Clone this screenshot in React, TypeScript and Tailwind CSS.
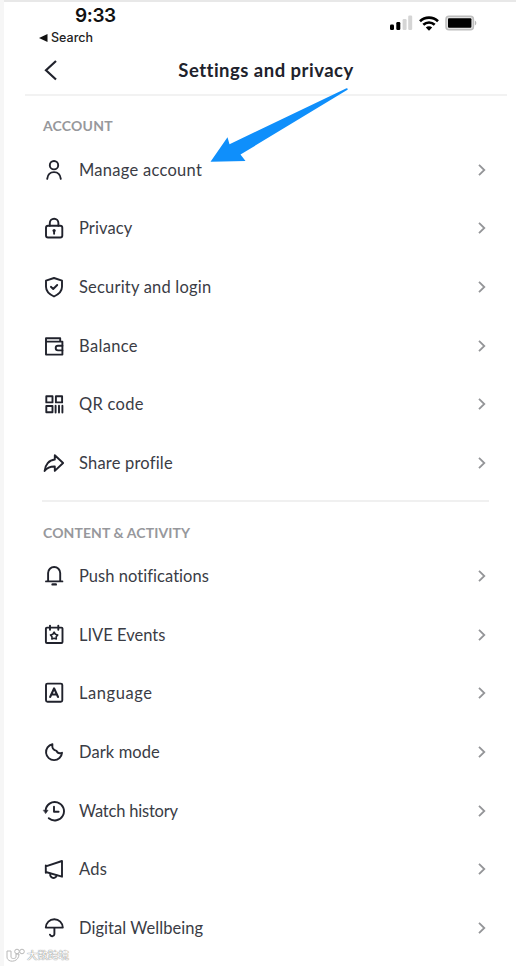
import type { ReactNode } from "react";

interface Item {
  label: string;
  icon: ReactNode;
  className: string;
}

const ACCOUNT: Item[] = [
  {
    label: "Manage account",
    className: "tracking-[0.27px]",
    icon: (
      <>
        <circle cx="12" cy="7.2" r="4.2" />
        <path d="M5.2 20.800c.5-4.100 3.100-6.700 6.800-6.700s6.300 2.600 6.800 6.700" />
      </>
    ),
  },
  {
    label: "Privacy",
    className: "tracking-[0.1px]",
    icon: (
      <>
        <rect x="4" y="9.700" width="16.300" height="11.800" rx="2" />
        <path d="M7.800 9.700V7a4.300 4.300 0 0 1 8.600 0v2.700M12.100 15v2.800" />
        <circle cx="12.100" cy="14.600" r="1.600" fill="currentColor" stroke="none" />
      </>
    ),
  },
  {
    label: "Security and login",
    className: "tracking-[0.2px]",
    icon: (
      <>
        <path d="M12 3l8 2.7v6.100c0 4.400-3.400 7.600-8 9.700-4.600-2.100-8-5.300-8-9.700V5.700z" />
        <path d="M8.900 11.800l2.300 2.200 4-4" />
      </>
    ),
  },
  {
    label: "Balance",
    className: "tracking-[0.34px]",
    icon: (
      <>
        <path d="M4 4.300h14.200v3.300h2.200v13H4zM4 7.600h14.200" />
        <path d="M20.400 11.800h-4.400a2.300 2.300 0 0 0 0 4.600h4.400" />
      </>
    ),
  },
  {
    label: "QR code",
    className: "tracking-[0.27px]",
    icon: (
      <>
        <rect x="4.300" y="4.200" width="6.200" height="6.200" />
        <rect x="13.900" y="4.200" width="6.200" height="6.200" />
        <rect x="4.300" y="14" width="6.200" height="6.200" />
        <path d="M13.600 13.700v6.900M17 13.700v6.900M20.400 13.700v6.900" />
      </>
    ),
  },
  {
    label: "Share profile",
    className: "tracking-[0.2px]",
    icon: <path d="M12.800 4.200l8.300 7.800-8.300 7.900v-4.400c-4.500-.1-7.700 1.100-10.200 4.500C3.100 13.700 7 9 12.800 8.500z" />,
  },
];

const CONTENT: Item[] = [
  {
    label: "Push notifications",
    className: "tracking-[0.04px]",
    icon: (
      <>
        <path d="M4 17.400h16.400M6.100 17.400V9a6.050 6.050 0 0 1 12.100 0v8.400" />
        <path d="M10.600 20.400h3.200" strokeWidth="2.400" />
      </>
    ),
  },
  {
    label: "LIVE Events",
    className: "tracking-0",
    icon: (
      <>
        <rect x="3.900" y="4.600" width="16.600" height="15.400" rx="1" />
        <path d="M8 2.600v4.200M16.300 2.600v4.200" />
        <path
          d="M12.100 9.200l1.300 2 2.300.700-1.500 1.800.100 2.300-2.200-.800-2.200.800.100-2.300-1.500-1.800 2.300-.700z"
          strokeWidth="1.600"
        />
      </>
    ),
  },
  {
    label: "Language",
    className: "tracking-[0.56px]",
    icon: (
      <>
        <rect x="4" y="2.600" width="16.300" height="18.200" rx="1.500" />
        <path d="M8.200 15.900l3.900-8.500 3.900 8.500M9.600 13.500h5" strokeWidth="2.200" />
      </>
    ),
  },
  {
    label: "Dark mode",
    className: "tracking-[0.1px]",
    icon: <path d="M10.400 4.300a8 8 0 1 0 9.600 8.500c-2.800 1-4.800-.1-5.500-1.900-2.700-.7-4.600-3.200-4.100-6.600z" />,
  },
  {
    label: "Watch history",
    className: "tracking-[-0.2px]",
    icon: (
      <>
        <path d="M3.600 11.500a9.200 9.200 0 1 1 3.200 7.700M12 7.700v5h4.600" />
        <path d="M1.500 11.200h4.600l-2.300 3.200z" fill="currentColor" strokeWidth=".5" />
      </>
    ),
  },
  {
    label: "Ads",
    className: "tracking-[0.2px]",
    icon: (
      <>
        <path d="M3.800 8.500v7.300M3.800 9.400L20 4v15.700L3.800 15" />
        <path d="M8.300 16.800a3.300 3.300 0 0 0 6.400 1.700" />
      </>
    ),
  },
  {
    label: "Digital Wellbeing",
    className: "tracking-[0.05px]",
    icon: <path d="M3.800 11.600c.2-4.900 3.800-8.300 8.500-8.300s8.300 3.400 8.500 8.300zM12.400 11.600v6.500a2.300 2.300 0 0 1-4.500.500" />,
  },
];

function Row({ label, icon, className }: Item) {
  return (
    <li className="flex h-[58.67px] items-center">
      <svg
        viewBox="0 0 24 24"
        className="h-6 w-6 shrink-0 text-[#20222c]"
        fill="none"
        stroke="currentColor"
        strokeWidth="1.9"
        strokeLinejoin="round"
        strokeLinecap="round"
      >
        {icon}
      </svg>
      <span className={`ml-[13px] whitespace-nowrap text-[16.5px] leading-5 text-[#3a3c45] ${className}`}>{label}</span>
      <svg
        viewBox="0 0 12 14"
        className="ml-auto mr-px h-3.5 w-3 text-[#949598]"
        fill="none"
        stroke="currentColor"
        strokeWidth="1.8"
      >
        <path d="M3 1.800l5.300 5.200L3 12.200" />
      </svg>
    </li>
  );
}

function StatusBar() {
  return (
    <div className="flex h-[46px] justify-between pl-[39px] pr-[39px]">
      <div className="pt-1">
        <div className="pl-[36px] font-['Inter'] text-[19px] font-semibold leading-[20px] tracking-[-0.4px] text-[#111]">
          9:33
        </div>
        <div className="mt-1 flex items-center font-['Inter'] text-[12.5px] font-medium leading-4 text-[#222]">
          <svg viewBox="0 0 9 8" className="mr-[3px] h-2 w-[9px]" fill="#111">
            <path d="M0 4l8.500-4v8z" />
          </svg>
          Search
        </div>
      </div>
      <div className="flex h-[42px] items-center">
        <svg viewBox="0 0 23 16" className="h-4 w-[23px]">
          <rect x="0" y="9.500" width="4" height="5.500" rx="1.200" fill="#000" />
          <rect x="6.300" y="7" width="4" height="8" rx="1.200" fill="#000" />
          <rect x="12.600" y="4" width="4" height="11" rx="1.200" fill="#d5d5d5" />
          <rect x="18.200" y="0.500" width="4" height="14.500" rx="1.200" fill="#d5d5d5" />
        </svg>
        <svg viewBox="0 0 20 15" className="ml-[6px] h-[15px] w-5" fill="none" stroke="#000" strokeWidth="2.600">
          <path d="M1 5.200a13 13 0 0 1 18 0M4.300 8.800a8.300 8.300 0 0 1 11.400 0" />
          <path d="M10 14.800l-3.200-3.300a4.600 4.600 0 0 1 6.400 0z" fill="#000" stroke="none" />
        </svg>
        <svg viewBox="0 0 32 16" className="ml-[6px] h-4 w-8">
          <rect x="1" y="1.200" width="27.400" height="13.600" rx="3" fill="#e2e2e2" stroke="#bdbdbd" strokeWidth="1.500" />
          <rect x="3" y="3.200" width="23.400" height="9.600" rx="1" fill="#000" />
          <path d="M29.800 5.500c2 .8 2 4.200 0 5z" fill="#b9b9b9" />
        </svg>
      </div>
    </div>
  );
}

export default function App() {
  return (
    <div className="relative h-[966px] w-[516px] overflow-hidden border-l-4 border-l-[#f6f6f6] bg-white font-['Lato',sans-serif]">
      <div className="-ml-1 h-0.5 bg-[#e8e8e8]" />
      <div className="-ml-1">
        <StatusBar />
        <header className="relative ml-[25px] mr-[9px] flex h-[48px] items-center justify-center border-b-2 border-[#f2f2f2]">
          <svg
            viewBox="0 0 14 22"
            className="absolute left-[19px] top-[11px] h-[22px] w-3.5"
            fill="none"
            stroke="#20222c"
            strokeWidth="2.200"
          >
            <path d="M12 2L2 11.300l10 9.200" />
          </svg>
          <h1 className="pb-0.5 text-[18.5px] font-bold leading-6 tracking-[0.48px] text-[#20222c]">
            Settings and privacy
          </h1>
        </header>
        <main className="ml-[42px] mr-[27px]">
          <h2 className="mt-[20px] h-[24.4px] pl-px text-[14px] font-bold leading-5 tracking-[0.2px] text-[#97989c]">
            ACCOUNT
          </h2>
          <ul>
            {ACCOUNT.map((item) => (
              <Row key={item.label} {...item} />
            ))}
          </ul>
          <div className="mt-[7.500px] h-0.5 bg-[#f0f0f0]" />
          <h2 className="mt-[21px] h-[24px] pl-px text-[14px] font-bold leading-5 tracking-[0.1px] text-[#97989c]">
            CONTENT &amp; ACTIVITY
          </h2>
          <ul>
            {CONTENT.map((item) => (
              <Row key={item.label} {...item} />
            ))}
          </ul>
        </main>
      </div>

      {/* Pointer to the first row */}
      <svg viewBox="0 0 140 76" className="absolute left-[205px] top-[87px] h-[76px] w-[140px]" fill="#0f8ffb">
        <path d="M137.500 1.200q1.800 0 1 1.600L31.500 67.500l5 6.500L1.500 74.700 18.500 50.200l2 7z" />
      </svg>

      {/* Watermark */}
      <div className="absolute bottom-[4px] left-[2px] flex items-center text-white">
        <svg viewBox="0 0 20 14" className="h-3.5 w-5" fill="#fff" stroke="#b8b8b8" strokeWidth="1">
          <path d="M1 3h4v6c0 2 5 2 5 0V6h3c0 9-12 9-12 3z" />
          <circle cx="11" cy="3.500" r="2.300" />
          <circle cx="16" cy="3.500" r="2.300" />
        </svg>
        <span className="ml-px font-['Noto_Sans_CJK_SC',sans-serif] text-[10.5px] leading-3 [text-shadow:0_0_1px_#777,0_0_1px_#888]">
          大数跨境
        </span>
      </div>
    </div>
  );
}
